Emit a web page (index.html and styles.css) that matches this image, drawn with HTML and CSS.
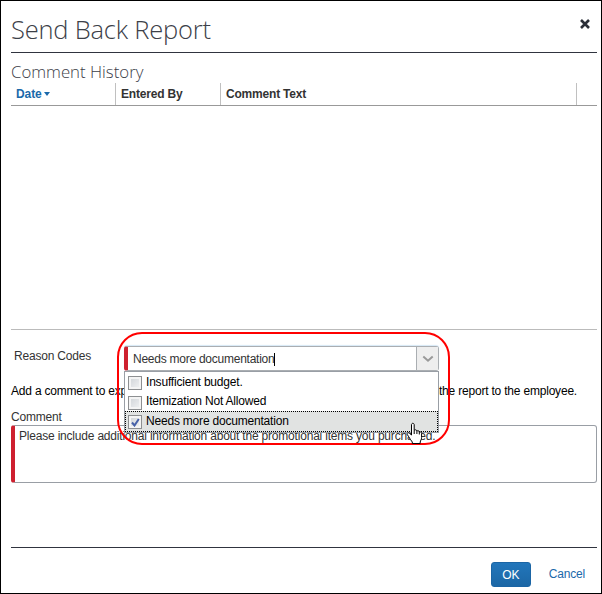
FILE: index.html
```html
<!DOCTYPE html>
<html lang="en">
<head>
<meta charset="utf-8">
<title>Send Back Report</title>
<link rel="stylesheet" href="styles.css">
</head>
<body>
<main class="dialog">
  <header class="dialog-header">
    <h1>Send Back Report</h1>
    <svg class="close" width="10" height="10" viewBox="0 0 10 10"><path d="M1 1L9 9M9 1L1 9"/></svg>
  </header>
  <section class="history">
    <h2>Comment History</h2>
    <div class="columns">
      <div class="col date">Date<i class="sort"></i></div>
      <div class="col">Entered By</div>
      <div class="col">Comment Text</div>
      <div class="col"></div>
    </div>
    <div class="rows"></div>
  </section>
  <section class="reason">
    <label class="reason-label">Reason Codes</label>
    <div class="combo">
      <div class="combo-value">Needs more documentation<i class="caret"></i></div>
      <div class="combo-button"><svg width="12" height="8" viewBox="0 0 12 8"><path d="M1.3 1.5L6 5.7L10.7 1.5"/></svg></div>
      <div class="menu">
        <div class="option"><i class="check"></i><span>Insufficient budget.</span></div>
        <div class="option"><i class="check"></i><span>Itemization Not Allowed</span></div>
        <div class="option selected"><i class="check"><svg width="9" height="9" viewBox="0 0 9 9"><path d="M1 4.5L3.5 7.5L7.8 1"/></svg></i><span>Needs more documentation</span></div>
      </div>
      <div class="highlight"></div>
      <svg class="hand" width="18" height="23" viewBox="0 0 18 23"><path d="M5.5 13V2.8C5.5 .8 8.2 .8 8.2 2.8V8.5C8.7 7.4 10.7 7.6 10.9 9.1C11.6 8.3 13.2 8.7 13.3 10C14.3 9.4 15.6 10.2 15.6 11.5V15.5C15.6 17.5 14.5 18.5 14.2 20V21.5H6.3V20C5 18.5 3.8 16.5 2.7 14.7L1.2 12.4C.7 10.8 2.4 10.2 3.5 11.3Z"/><path d="M8.2 8.5V12M10.9 9.1V12M13.3 10V12.5"/></svg>
    </div>
  </section>
  <p class="hint"><span>Add a comment to explain</span><span>the report to the employee.</span></p>
  <label class="comment-label">Comment</label>
  <div class="comment-box">Please include additional information about the promotional items you purchased.</div>
  <footer class="actions">
    <button class="ok">OK</button>
    <a class="cancel">Cancel</a>
  </footer>
</main>
</body>
</html>
```
FILE: styles.css
```css
* { box-sizing: border-box; }
body { margin: 0; font-family: "Liberation Sans", Arial, sans-serif; font-size: 12px; letter-spacing: -.2px; color: #333; background: #fff; }
.dialog { width: 602px; height: 594px; border: 1px solid #000; padding: 0 4px 0 10px; display: flex; flex-direction: column; }
.dialog-header { height: 52px; flex: none; border-bottom: 1px solid #30343f; display: flex; justify-content: space-between; padding: 0 7px 0 0; }
h1, h2 { margin: 0; font-family: "Open Sans", sans-serif; font-weight: 300; color: #3c4048; }
h1 { font-size: 25.5px; letter-spacing: -.2px; line-height: 36px; padding-top: 10px; }
h2 { font-size: 16.8px; letter-spacing: 0; line-height: 22px; height: 30px; padding-top: 8px; }
.close { margin-top: 18px; }
.close path { stroke: #2b2f38; stroke-width: 2.6; fill: none; }
.columns { display: grid; grid-template-columns: 104px 105px 356px 1fr; height: 23px; border-bottom: 1px solid #999; font-weight: bold; line-height: 22px; }
.col { padding-left: 5px; border-left: 1px solid #c0c0c0; }
.date { color: #1b69aa; border-left: 0; letter-spacing: -.1px; }
.sort { display: inline-block; border: 3px solid transparent; border-top: 4px solid #1b69aa; border-bottom: 0; margin-left: 2px; vertical-align: 2px; }
.rows { height: 224px; border-bottom: 1px solid #bbb; }
.reason { display: flex; height: 53px; padding: 16px 0 0 3px; }
.reason-label { width: 110px; line-height: 20px; }
.combo { position: relative; width: 315px; height: 25px; border: 1px solid #aaaeb2; border-left: 4px solid #ce202f; border-radius: 3px; display: flex; background: #fff; box-shadow: 0 -1px 1px #d6e8f6; }
.combo-value { flex: 1; padding-left: 5px; line-height: 24px; letter-spacing: -.25px; }
.caret { display: inline-block; width: 1px; height: 13px; background: #000; vertical-align: -3px; }
.combo-button { width: 22px; border-left: 1px solid #aaaeb2; background: #eee; display: flex; align-items: center; justify-content: center; }
.combo-button path { fill: none; stroke: #999; stroke-width: 2; }
.menu { position: absolute; z-index: 2; left: -4px; top: 24px; width: 315px; height: 62px; border: 1px solid #999ea5; background: #fff; color: #000; }
.option { height: 20px; display: flex; padding: 4px 0 0 3px; line-height: 13px; }
.option span { margin: -1px 0 0 4px; }
.option:first-child span { margin-top: 0; }
.option:nth-child(2) { height: 19px; }
.selected { height: 21px; padding: 3px 0 0 2px; border: 1px dotted #000; background: #e1e3e2; }
.selected span { margin-top: 0; }
.check { width: 14px; height: 14px; flex: none; border: 1px solid #8d8f91; box-shadow: inset 0 0 0 2px #f4f4f4; background: linear-gradient(135deg, #ced2d6, #f3f4f5); display: flex; align-items: center; justify-content: center; }
.check path { fill: none; stroke: #4761a8; stroke-width: 2; }
.highlight { position: absolute; z-index: 3; left: -11px; top: -15px; width: 333px; height: 113px; border: 2px solid #f00; border-radius: 25px; }
.hand { position: absolute; z-index: 4; left: 278px; top: 75px; }
.hand path { fill: #fff; stroke: #000; stroke-width: 1; }
.hint { width: 566px; margin: 0; height: 26px; line-height: 16px; display: flex; justify-content: space-between; color: #000; }
.comment-label { height: 16px; line-height: 16px; }
.comment-box { height: 58px; flex: none; border: 1px solid #999ea5; border-left: 4px solid #ce202f; border-radius: 3px; padding: 3px 4px; line-height: 14px; }
.actions { margin-top: 64px; border-top: 1px solid #30343f; display: flex; justify-content: flex-end; padding: 14px 12px 0 0; gap: 18px; line-height: 25px; }
.ok { width: 40px; height: 25px; padding: 0; border: 1px solid #1b65a5; border-radius: 3px; background: linear-gradient(#2276bb, #1c67a5); color: #fff; font: 12px "Liberation Sans", Arial, sans-serif; }
.cancel { color: #1b69aa; }
```
